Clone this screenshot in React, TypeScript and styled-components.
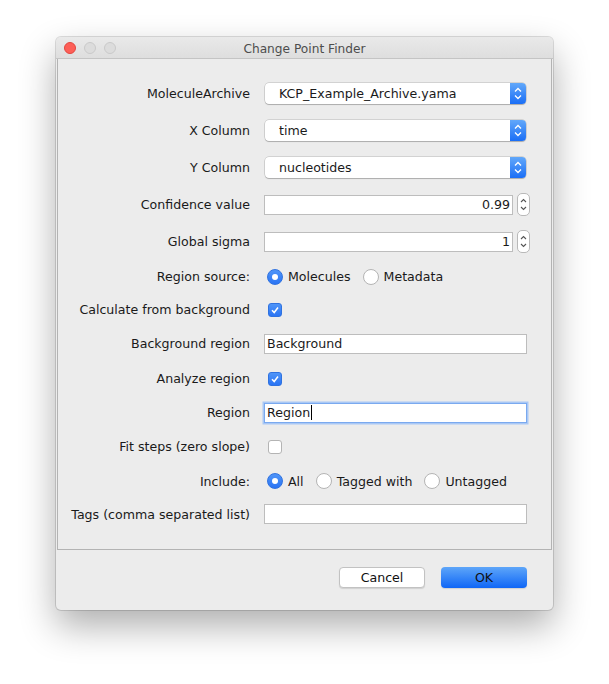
import React from 'react'
import styled, { createGlobalStyle } from 'styled-components'

const GlobalStyle = createGlobalStyle`
    html, body {
        margin: 0;
        background: #ffffff;
    }
    body {
        font-family: "DejaVu Sans", "Liberation Sans", sans-serif;
        color: #1a1a1a;
    }
`

const Page = styled.div`
    padding: 37px 0 0 56px;
    height: 647px;
    width: 553px;
`

const Window = styled.div`
    width: 497px;
    background: #ececec;
    border-radius: 5px;
    overflow: hidden;
    box-shadow: 0 0 0 1px rgba(0, 0, 0, 0.13), 0 16px 36px rgba(0, 0, 0, 0.32);
`

const TitleBar = styled.div`
    height: 21px;
    display: flex;
    align-items: center;
    justify-content: center;
    padding-top: 2px;
    box-sizing: border-box;
    height: 22px;
    position: relative;
    background: linear-gradient(#e9e9e9, #dedede);
    border-bottom: 1px solid #c4c4c4;
    font-size: 12.2px;
    color: #4d4d4d;
`

const Lights = styled.div`
    position: absolute;
    left: 8px;
    top: 5px;
    display: flex;
    gap: 8px;
`

const Light = styled.span<{ $color?: string }>`
    width: 12px;
    height: 12px;
    border-radius: 50%;
    box-sizing: border-box;
    background: ${p => p.$color ?? '#dcdcdc'};
    border: 1px solid ${p => (p.$color ? '#e2463f' : '#c9c9c9')};
`

const Panel = styled.div`
    margin: 0 1px;
    border: 1px solid #b3b3b3;
    border-top: none;
    padding: 16px 0 19px;
`

const Form = styled.div`
    display: grid;
    grid-template-columns: 192px 264px;
    column-gap: 14px;
`

const Label = styled.div<{ $h: number }>`
    height: ${p => p.$h}px;
    display: flex;
    align-items: center;
    justify-content: flex-end;
    font-size: 12.6px;
    white-space: nowrap;
`

const Cell = styled.div<{ $h: number }>`
    height: ${p => p.$h}px;
    display: flex;
    align-items: center;
    font-size: 12.6px;
`

const Select = styled.div`
    margin-left: 1px;
    width: 261px;
    height: 21px;
    box-sizing: border-box;
    display: flex;
    align-items: center;
    background: #fff;
    border-radius: 4px;
    box-shadow: 0 0 0 0.5px rgba(0, 0, 0, 0.22), 0 1px 1px rgba(0, 0, 0, 0.18);
    overflow: hidden;
`

const SelectText = styled.span`
    flex: 1;
    padding-left: 14px;
`

const SelectArrow = styled.span`
    width: 16px;
    height: 21px;
    display: flex;
    background: linear-gradient(#62a8fa, #1a6ef6);
`

const Field = styled.div<{ $w: number; $right?: boolean; $focus?: boolean }>`
    width: ${p => p.$w}px;
    height: 20px;
    box-sizing: border-box;
    display: flex;
    align-items: center;
    justify-content: ${p => (p.$right ? 'flex-end' : 'flex-start')};
    padding: 0 2px;
    background: #fff;
    border: 1px solid ${p => (p.$focus ? '#7aa9ef' : '#bdbdbd')};
    box-shadow: ${p => (p.$focus ? '0 0 0 1.5px #a9c8f5' : 'none')};
`

const Caret = styled.span`
    width: 1px;
    height: 15px;
    background: #000;
    margin-left: 1px;
`

const Spinner = styled.div`
    display: flex;
    align-items: center;
    gap: 4px;
`

const Stepper = styled.span`
    width: 11px;
    height: 21px;
    display: flex;
    border: 1px solid #b9b9b9;
    border-radius: 5px;
    background: #fff;
`

const Options = styled.div`
    display: flex;
    align-items: center;
    margin-left: 3px;
`

const Option = styled.label`
    display: flex;
    align-items: center;
    gap: 5px;
    margin-right: 12px;
`

const Radio = styled.span<{ $on?: boolean }>`
    width: 16px;
    height: 16px;
    box-sizing: border-box;
    border-radius: 50%;
    display: flex;
    align-items: center;
    justify-content: center;
    background: ${p => (p.$on ? 'linear-gradient(#4f95f8, #2a74f4)' : '#fff')};
    border: 1px solid ${p => (p.$on ? '#2f72e0' : '#b4b4b4')};
    &::after {
        content: '';
        width: 6px;
        height: 6px;
        border-radius: 50%;
        background: #fff;
        display: ${p => (p.$on ? 'block' : 'none')};
    }
`

const Check = styled.span<{ $on?: boolean }>`
    margin-left: 4px;
    width: 14px;
    height: 14px;
    box-sizing: border-box;
    border-radius: 3px;
    display: flex;
    background: ${p => (p.$on ? 'linear-gradient(#4f95f8, #2a74f4)' : '#fff')};
    border: 1px solid ${p => (p.$on ? '#2f72e0' : '#b4b4b4')};
`

const Footer = styled.div`
    display: flex;
    justify-content: flex-end;
    gap: 16px;
    padding: 17px 26px 22px 0;
`

const Button = styled.button<{ $primary?: boolean }>`
    width: 86px;
    height: 21px;
    font: inherit;
    font-size: 12.6px;
    color: #111;
    border-radius: 4px;
    border: ${p => (p.$primary ? 'none' : '1px solid #c2c2c2')};
    background: ${p => (p.$primary ? 'linear-gradient(#5ea6f9, #0f66f6)' : '#fff')};
    box-shadow: 0 1px 1px rgba(0, 0, 0, 0.12);
    padding: 0;
`

const Chevrons: React.FC<{ color: string }> = ({ color }) => (
    <svg width="100%" height="100%" viewBox="0 0 16 21">
        <path d="M5 8.5 L8 5.5 L11 8.5 M5 12.5 L8 15.5 L11 12.5" fill="none" stroke={color} strokeWidth="1.3" />
    </svg>
)

const SmallChevrons: React.FC = () => (
    <svg width="100%" height="100%" viewBox="0 0 11 19">
        <path d="M3 7 L5.5 4.5 L8 7 M3 12 L5.5 14.5 L8 12" fill="none" stroke="#555" strokeWidth="1.1" />
    </svg>
)

const Tick: React.FC = () => (
    <svg width="100%" height="100%" viewBox="0 0 12 12">
        <path d="M3 6.3 L5.2 8.5 L9 3.5" fill="none" stroke="#fff" strokeWidth="1.5" />
    </svg>
)

const Dropdown: React.FC<{ value: string }> = ({ value }) => (
    <Select>
        <SelectText>{value}</SelectText>
        <SelectArrow><Chevrons color="#fff" /></SelectArrow>
    </Select>
)

const NumberField: React.FC<{ value: string }> = ({ value }) => (
    <Spinner>
        <Field $w={249} $right>{value}</Field>
        <Stepper><SmallChevrons /></Stepper>
    </Spinner>
)

const Radios: React.FC<{ items: string[] }> = ({ items }) => (
    <Options>
        {items.map((it, i) => (
            <Option key={it}>
                <Radio $on={i === 0} />
                {it}
            </Option>
        ))}
    </Options>
)

type Row = { label: string; h: number; control: React.ReactNode }

const rows: Row[] = [
    { label: 'MoleculeArchive', h: 37, control: <Dropdown value="KCP_Example_Archive.yama" /> },
    { label: 'X Column', h: 37, control: <Dropdown value="time" /> },
    { label: 'Y Column', h: 37, control: <Dropdown value="nucleotides" /> },
    { label: 'Confidence value', h: 37, control: <NumberField value="0.99" /> },
    { label: 'Global sigma', h: 37, control: <NumberField value="1" /> },
    { label: 'Region source:', h: 33, control: <Radios items={['Molecules', 'Metadata']} /> },
    { label: 'Calculate from background', h: 33, control: <Check $on><Tick /></Check> },
    { label: 'Background region', h: 35, control: <Field $w={263}>Background</Field> },
    { label: 'Analyze region', h: 35, control: <Check $on><Tick /></Check> },
    { label: 'Region', h: 33, control: <Field $w={263} $focus>Region<Caret /></Field> },
    { label: 'Fit steps (zero slope)', h: 35, control: <Check /> },
    { label: 'Include:', h: 34, control: <Radios items={['All', 'Tagged with', 'Untagged']} /> },
    { label: 'Tags (comma separated list)', h: 32, control: <Field $w={263} /> },
]

const App: React.FC = () => (
    <Page>
        <GlobalStyle />
        <Window>
            <TitleBar>
                <Lights>
                    <Light $color="#fd5f57" />
                    <Light />
                    <Light />
                </Lights>
                Change Point Finder
            </TitleBar>
            <Panel>
                <Form>
                    {rows.map(r => (
                        <React.Fragment key={r.label}>
                            <Label $h={r.h}>{r.label}</Label>
                            <Cell $h={r.h}>{r.control}</Cell>
                        </React.Fragment>
                    ))}
                </Form>
            </Panel>
            <Footer>
                <Button>Cancel</Button>
                <Button $primary>OK</Button>
            </Footer>
        </Window>
    </Page>
)

export default App
